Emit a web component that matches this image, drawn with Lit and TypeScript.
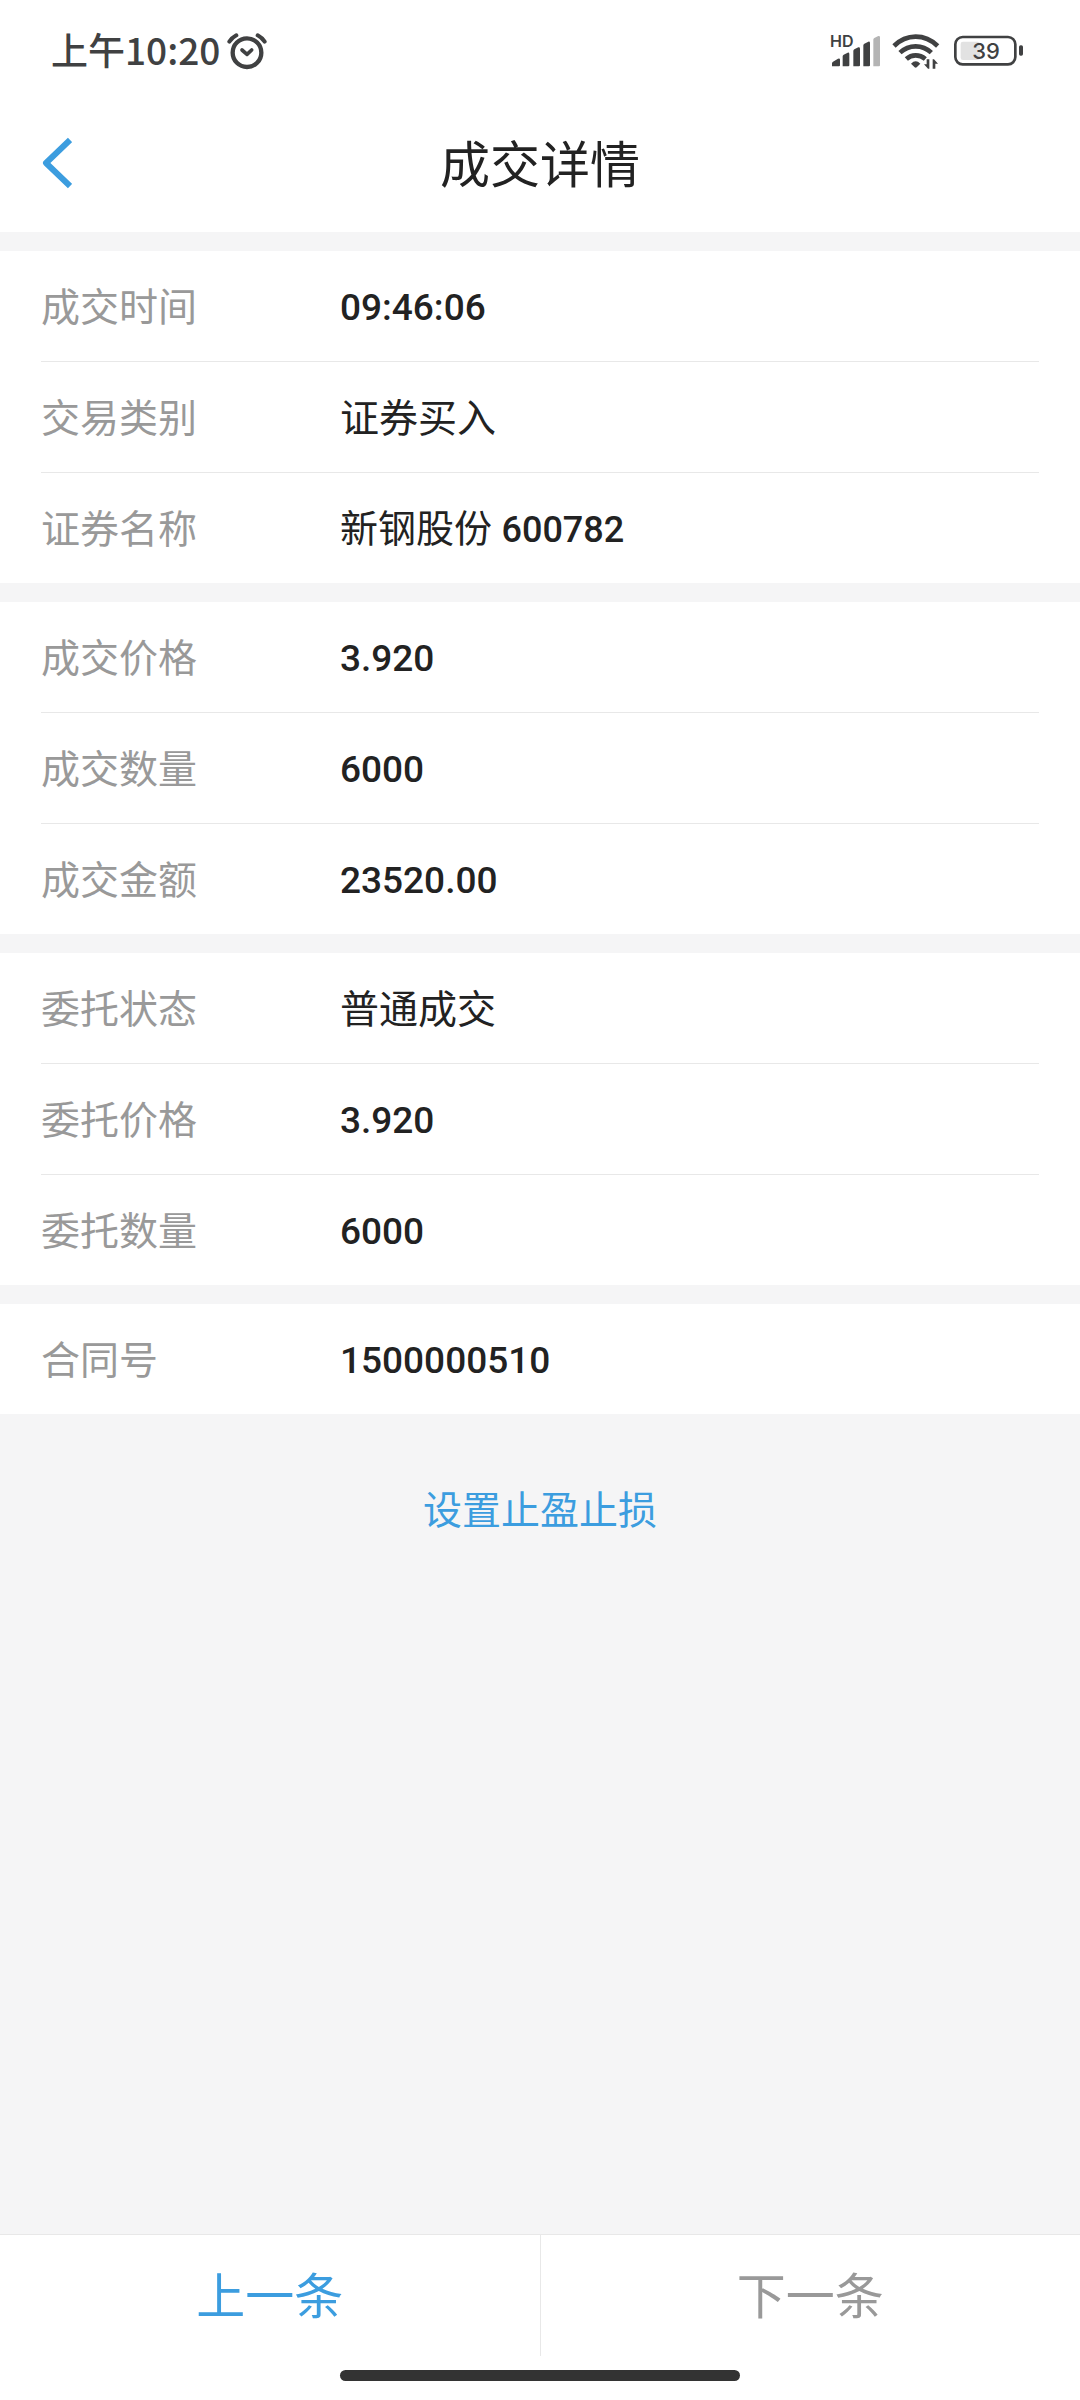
import { LitElement, html, css } from "lit";
import { customElement, property } from "lit/decorators.js";

interface Field {
  label: string;
  value: string;
}

const SECTIONS: Field[][] = [
  [
    { label: "成交时间", value: "09:46:06" },
    { label: "交易类别", value: "证券买入" },
    { label: "证券名称", value: "新钢股份 600782" },
  ],
  [
    { label: "成交价格", value: "3.920" },
    { label: "成交数量", value: "6000" },
    { label: "成交金额", value: "23520.00" },
  ],
  [
    { label: "委托状态", value: "普通成交" },
    { label: "委托价格", value: "3.920" },
    { label: "委托数量", value: "6000" },
  ],
  [{ label: "合同号", value: "1500000510" }],
];

@customElement("status-bar")
export class StatusBar extends LitElement {
  static styles = css`
    :host {
      display: flex;
      align-items: center;
      justify-content: space-between;
      box-sizing: border-box;
      height: 94px;
      padding: 8px 56px 0 51px;
      color: #404142;
      background: #fff;
    }
    .clock,
    .system {
      display: flex;
      align-items: center;
    }
    .clock {
      gap: 6px;
    }
    .system {
      gap: 12px;
    }
    .time {
      padding-bottom: 4px;
      font: 500 37px/56px "Noto Sans CJK SC", sans-serif;
    }
    svg {
      display: block;
      overflow: visible;
    }
    .line {
      fill: none;
      stroke: currentColor;
    }
    .solid {
      fill: currentColor;
    }
    .dim {
      fill: #b4b4b4;
    }
    .charge {
      fill: #e2e2e2;
    }
    .hd {
      font: 600 48px Inter, sans-serif;
      fill: currentColor;
    }
    .level {
      font: 500 66px Inter, sans-serif;
      fill: currentColor;
    }
  `;

  render() {
    return html`
      <div class="clock">
        <span class="time">上午10:20</span>
        <svg width="42" height="38" viewBox="590 65 126 114" aria-hidden="true">
          <circle class="line" cx="653" cy="127" r="43" stroke-width="13" />
          <path class="line" stroke-width="12" stroke-linecap="round" d="M600 94Q608 82 621 75M685 75Q698 82 706 94" />
          <path class="line" stroke-width="11" stroke-linecap="round" stroke-linejoin="round" d="M638 119l15 13 14-13" />
        </svg>
      </div>
      <div class="system">
        <svg width="50" height="36" viewBox="60 40 150 108" aria-hidden="true">
          <text class="hd" x="60" y="82">HD</text>
          <path class="solid" d="M66 140v-9q0-3 3-5l15-9q6-2 6 3v17q0 3-3 3zM98 140v-30q0-3 3-5l12-6q5-1 5 4v34q0 3-3 3zM130 140V94q0-3 3-5l12-6q5-1 5 4v50q0 3-3 3zM160 140V77q0-3 3-5l12-6q5-1 5 4v67q0 3-3 3z" />
          <path class="dim" d="M190 140V60q0-3 3-5l12-6q5-1 5 4v84q0 3-3 3z" />
        </svg>
        <svg width="48" height="36" viewBox="246 40 144 108" aria-hidden="true">
          <path class="line" stroke-width="14" d="M252 79Q280 51 317 51T383 79M270 99Q290 80 317 80T364 99M289 118Q301 107 317 107T346 118" />
          <path class="solid" d="M303 132Q317 118 331 132L320 143Q317 145 314 143z" />
          <path class="solid" d="M350 119h8v28h-4l-12-13h8zM368 147v-28h4l12 13h-8v15z" />
        </svg>
        <svg width="72" height="36" viewBox="426 40 216 108" aria-hidden="true">
          <rect class="line" x="436" y="52" width="180" height="82" rx="22" stroke-width="8" />
          <rect class="charge" x="452" y="66" width="58" height="55" rx="7" />
          <rect class="solid" x="627" y="77" width="12" height="31" rx="5" />
          <text class="level" x="528" y="119" text-anchor="middle">39</text>
        </svg>
      </div>
    `;
  }
}

@customElement("detail-section")
export class DetailSection extends LitElement {
  @property({ attribute: false }) fields: Field[] = [];

  static styles = css`
    :host {
      display: block;
      background: #fff;
      padding: 0 41px;
    }
    .list {
      margin: 0;
    }
    .row {
      display: grid;
      grid-template-columns: 299px 1fr;
      align-items: center;
      min-height: 110px;
      font-size: 39px;
      line-height: 56px;
    }
    .row + .row {
      border-top: 1px solid #e8e8e8;
    }
    .label {
      padding-bottom: 5px;
      color: #999;
    }
    .value {
      margin: 0;
      padding-top: 3px;
      color: #222;
      font-family: Roboto, "Noto Sans CJK SC", sans-serif;
    }
    .number {
      font-size: 37px;
      font-weight: 500;
    }
    .named {
      font-size: 38px;
    }
    .code {
      font-size: 36px;
      font-weight: 500;
    }
  `;

  private renderValue(value: string) {
    if (/^[\d.:]+$/.test(value)) {
      return html`<dd class="value number">${value}</dd>`;
    }
    const [name, code] = value.split(" ");
    return code
      ? html`<dd class="value named">${name} <span class="code">${code}</span></dd>`
      : html`<dd class="value">${name}</dd>`;
  }

  render() {
    return html`
      <dl class="list">
        ${this.fields.map(
          (f) => html`<div class="row"><dt class="label">${f.label}</dt>${this.renderValue(f.value)}</div>`
        )}
      </dl>
    `;
  }
}

@customElement("app-root")
export class AppRoot extends LitElement {
  static styles = css`
    :host {
      display: flex;
      flex-direction: column;
      min-height: 100vh;
      background: #f5f5f6;
      font-family: "Noto Sans CJK SC", sans-serif;
    }
    button {
      border: 0;
      padding: 0;
      background: none;
      font-family: inherit;
      cursor: pointer;
    }
    .header {
      display: grid;
      grid-template-columns: 80px 1fr 80px;
      align-items: center;
      height: 138px;
      background: #fff;
    }
    .back {
      display: flex;
      justify-content: flex-end;
      padding: 20px 8px 20px 0;
      color: #3c9ddf;
    }
    .chevron {
      display: block;
      fill: none;
      stroke: currentColor;
      stroke-width: 6;
      stroke-linejoin: round;
    }
    .title {
      margin: 0;
      padding-bottom: 4px;
      text-align: center;
      font-size: 50px;
      line-height: 72px;
      font-weight: 400;
      color: #222;
    }
    .main {
      flex: 1;
      display: flex;
      flex-direction: column;
      gap: 19px;
      padding-top: 19px;
    }
    .action {
      align-self: center;
      margin-top: 46px;
      font-size: 39px;
      line-height: 56px;
      color: #3c9ddf;
    }
    .pager {
      display: flex;
      border-top: 1px solid #e8e8e8;
      background: #fff;
    }
    .page {
      flex: 1;
      height: 121px;
      padding-bottom: 5px;
      font-size: 49px;
      line-height: 72px;
      color: #3c9ddf;
    }
    .page + .page {
      border-left: 1px solid #e8e8e8;
    }
    .page:disabled {
      color: #999;
      cursor: default;
    }
    .home {
      display: flex;
      justify-content: center;
      padding: 14px 0 19px;
      background: #fff;
    }
    .handle {
      width: 37%;
      height: 11px;
      border-radius: 6px;
      background: #333;
    }
  `;

  render() {
    return html`
      <status-bar></status-bar>
      <header class="header">
        <button class="back" aria-label="返回">
          <svg class="chevron" width="32" height="52" viewBox="0 0 32 52" aria-hidden="true">
            <path d="M30 3L6 26l24 23" />
          </svg>
        </button>
        <h1 class="title">成交详情</h1>
      </header>
      <main class="main">
        ${SECTIONS.map((s) => html`<detail-section .fields=${s}></detail-section>`)}
        <button class="action">设置止盈止损</button>
      </main>
      <nav class="pager">
        <button class="page">上一条</button>
        <button class="page" disabled>下一条</button>
      </nav>
      <div class="home"><div class="handle"></div></div>
    `;
  }
}
